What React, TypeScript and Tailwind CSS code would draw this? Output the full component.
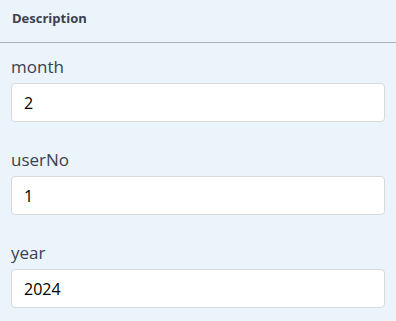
import React from 'react';

const fields = [
  { name: 'month', value: '2' },
  { name: 'userNo', value: '1' },
  { name: 'year', value: '2024' },
];

export default function App() {
  return (
    <div className="w-[396px] h-[321px] bg-[#ebf3fb] font-['Open_Sans',sans-serif] text-[#3b4151] overflow-hidden">
      <div className="h-[43px] px-3 flex items-center border-b border-[#a9b3c0]">
        <span className="text-[13px] font-bold -mt-[4px]">Description</span>
      </div>
      <div className="px-[11px] pt-[12px]">
        {fields.map((f) => (
          <div key={f.name} className="mb-[26px]">
            <label className="block text-[17px] leading-[24px] text-[#3b4151]">{f.name}</label>
            <input
              readOnly
              value={f.value}
              className="mt-[4px] w-[374px] h-[39px] bg-white border border-[#d9d9d9] rounded-[4px] px-[12px] text-[16px] text-black outline-none font-['Open_Sans',sans-serif]"
            />
          </div>
        ))}
      </div>
    </div>
  );
}
